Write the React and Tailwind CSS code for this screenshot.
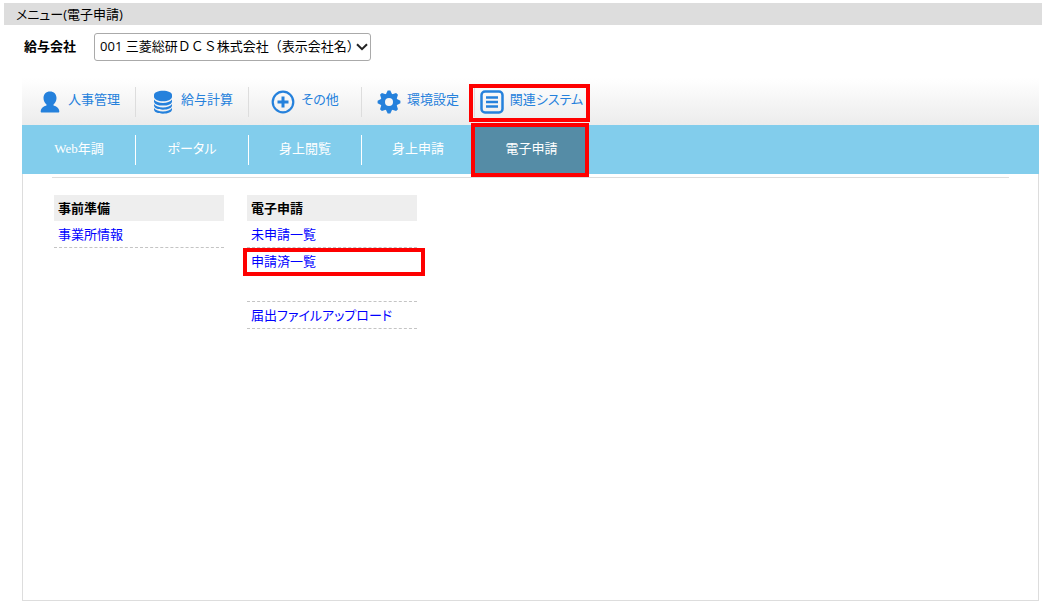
import React, { useState } from "react";
import clsx from "clsx";

const PersonIcon = () => (
  <svg viewBox="0 0 24 24" className="size-6 shrink-0" fill="#2581dc" aria-hidden="true">
    <path d="M12 1.500c3.900 0 6.500 2.700 6.500 6.500 0 2.700-1.300 5-3 6.400v1c3.200.8 5.500 2.700 5.800 5.500.1 1-.3 1.600-1.200 1.600H3.900c-.9 0-1.300-.6-1.200-1.600.3-2.800 2.600-4.700 5.800-5.500v-1C6.800 13 5.500 10.700 5.500 8c0-3.800 2.600-6.500 6.500-6.500z" />
  </svg>
);

const DatabaseIcon = () => (
  <svg viewBox="0 0 24 24" className="size-6 shrink-0" fill="#2581dc" aria-hidden="true">
    <path d="M3 5C3 2.400 7 .8 12 .8s9 1.600 9 4.200v1.700c0 2.700-4 4.500-9 4.500s-9-1.800-9-4.500z" />
    <path d="M3 9.600c1.500 2.300 5 3.500 9 3.500s7.500-1.200 9-3.500v1.800c0 2.400-4 4.200-9 4.200s-9-1.800-9-4.200z" />
    <path d="M3 13.900c1.500 2.300 5 3.500 9 3.500s7.500-1.200 9-3.500v1.700c0 2.400-4 4.200-9 4.200s-9-1.800-9-4.200z" />
    <path d="M3 18.100c1.500 2.300 5 3.400 9 3.400s7.500-1.100 9-3.400v1.500c0 2.400-4 4.200-9 4.200s-9-1.800-9-4.200z" />
  </svg>
);

const PlusIcon = () => (
  <svg viewBox="0 0 24 24" className="size-6 shrink-0" fill="none" stroke="#2581dc" aria-hidden="true">
    <circle cx="12" cy="12" r="10.300" strokeWidth="2.200" />
    <path d="M12 6.500v11M6.500 12h11" strokeWidth="3" />
  </svg>
);

// eight tapered teeth around the ring
const GearIcon = () => (
  <svg viewBox="0 0 24 24" className="size-6 shrink-0" fill="#2581dc" aria-hidden="true">
    {[0, 45, 90, 135, 180, 225, 270, 315].map((angle) => (
      <path key={angle} d="M8.500 5L10.700.6h2.600L15.500 5z" transform={`rotate(${angle} 12 12)`} />
    ))}
    <circle cx="12" cy="12" r="8.300" />
    <circle cx="12" cy="12" r="4" fill="#f6f6f6" />
  </svg>
);

const ListIcon = () => (
  <svg viewBox="0 0 24 24" className="size-6 shrink-0" fill="none" stroke="#2581dc" aria-hidden="true">
    <rect x="1.500" y="1.500" width="21" height="21" rx="3.500" strokeWidth="2.500" />
    <path d="M6 7.500h12M6 12h12M6 16.500h12" strokeWidth="2.600" />
  </svg>
);

const MENUS = [
  { label: "人事管理", Icon: PersonIcon },
  { label: "給与計算", Icon: DatabaseIcon },
  { label: "その他", Icon: PlusIcon },
  { label: "環境設定", Icon: GearIcon },
  { label: "関連システム", Icon: ListIcon },
];

const TABS = ["Web年調", "ポータル", "身上閲覧", "身上申請", "電子申請"];

const Highlight = ({ className }) => (
  <span className={clsx("pointer-events-none absolute z-10 border-4 border-[#fe0000]", className)} />
);

const LinkColumn = ({ title, children }) => (
  <section className="w-[170px]">
    <h2 className="bg-[#eee] px-1 text-[13px] leading-[26px] font-bold text-black">{title}</h2>
    <ul>{children}</ul>
  </section>
);

const LinkRow = ({ label, highlighted }) => (
  <li className="relative border-b border-dashed border-[#c4c4c4] px-1 leading-[26px]">
    <a href="#" className="text-[#0000ff]">
      {label}
    </a>
    {highlighted && <Highlight className="-right-2 -left-1 top-0 h-7" />}
  </li>
);

export default function App() {
  const [company, setCompany] = useState("001");
  const [menu, setMenu] = useState("関連システム");
  const [tab, setTab] = useState("電子申請");

  return (
    <div className="flex min-h-screen flex-col bg-white font-['Open_Sans','Noto_Sans_CJK_JP',sans-serif] text-[13px] text-black [font-feature-settings:'palt']">
      <header className="mt-[3px] ml-1 bg-[#ddd] px-3">
        <h1 className="text-[13px] leading-[22px]">メニュー(電子申請)</h1>
      </header>

      <div className="mt-2 flex items-center gap-[18px] pl-6">
        <label htmlFor="company" className="text-[13px] font-bold">
          給与会社
        </label>
        <div className="relative">
          <select
            id="company"
            value={company}
            onChange={(e) => setCompany(e.target.value)}
            className="h-7 w-[277px] appearance-none rounded-[3px] border border-[#aaa] bg-white pl-[5px] text-[13px] [font-feature-settings:normal]"
          >
            <option value="001">001 三菱総研ＤＣＳ株式会社（表示会社名）</option>
          </select>
          <svg
            viewBox="0 0 12 8"
            className="pointer-events-none absolute top-2.5 right-[3px] h-2 w-3"
            fill="none"
            stroke="#222"
            strokeWidth="2"
            aria-hidden="true"
          >
            <path d="M1 1.200l5 5 5-5" />
          </svg>
        </div>
      </div>

      <main className="mt-[17px] mr-[3px] ml-[22px] flex grow flex-col">
        <nav className="flex h-[47px] items-center bg-linear-to-b from-white to-[#ececec] pl-px">
          {MENUS.map(({ label, Icon }) => (
            <div key={label} className="relative w-[113px] border-r border-[#ddd] last:border-r-0">
              <button
                type="button"
                onClick={() => setMenu(label)}
                className="flex h-[30px] w-full items-center justify-center gap-1.5 whitespace-nowrap text-[#2581dc]"
              >
                <Icon />
                <span className="pb-1">{label}</span>
              </button>
              {menu === label && <Highlight className="-top-[3px] -left-1.5 h-[38px] w-[121px]" />}
            </div>
          ))}
        </nav>

        <div className="flex h-[49px] items-center bg-[#82cdec] pl-px" role="tablist">
          {TABS.map((label) => (
            <div
              key={label}
              className={clsx(
                "relative flex w-[113px] items-center justify-center",
                tab === label ? "h-full bg-[#558ca6]" : "h-[30px] border-r border-white"
              )}
            >
              <button
                type="button"
                role="tab"
                aria-selected={tab === label}
                onClick={() => setTab(label)}
                className="h-full w-full pb-0.5 font-['Liberation_Serif','Noto_Sans_CJK_JP',sans-serif] text-white"
              >
                {label}
              </button>
              {tab === label && <Highlight className="-top-0.5 -left-1 h-[54px] w-[118px]" />}
            </div>
          ))}
        </div>

        <div className="grow border border-t-0 border-[#ddd] px-[29px] pt-[3px]">
          <hr className="border-[#ddd]" />
          <div className="mt-[17px] flex gap-[23px] pl-0.5">
            <LinkColumn title="事前準備">
              <LinkRow label="事業所情報" />
            </LinkColumn>
            <LinkColumn title="電子申請">
              <LinkRow label="未申請一覧" />
              <LinkRow label="申請済一覧" highlighted />
              <li className="h-[27px] border-b border-dashed border-[#c4c4c4]" />
              <LinkRow label="届出ファイルアップロード" />
            </LinkColumn>
          </div>
        </div>
      </main>
    </div>
  );
}
